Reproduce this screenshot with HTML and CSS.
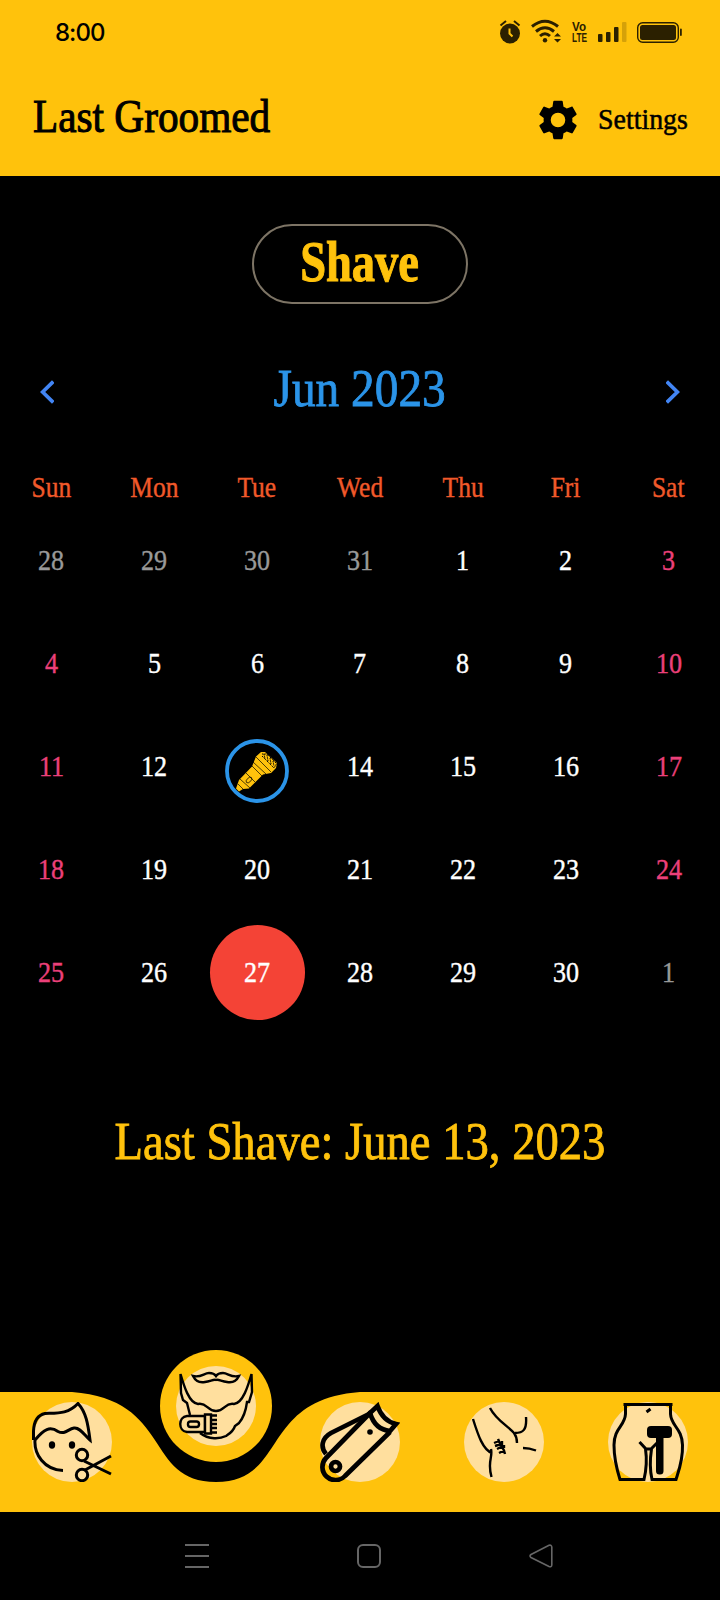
FILE: index.html
```html
<!DOCTYPE html>
<html lang="en">
<head>
<meta charset="utf-8">
<title>Last Groomed</title>
<link rel="stylesheet" href="styles.css">
</head>
<body>
<div class="app">
  <header class="header">
    <div class="status">
      <span class="clock">8:00</span>
      <svg class="status-icons" viewBox="0 0 190 28" width="190" height="28" fill="#2b2000">
        <circle cx="18" cy="15.500" r="10"/>
        <path d="M8.500 7.500L14 3M22 3L27.500 7.500" stroke="#2b2000" stroke-width="2"/>
        <path d="M17.500 10.500V15.500L20.500 18.500" stroke="#ffc20c" stroke-width="2" fill="none"/>
        <g fill="none" stroke="#2b2000" stroke-width="3">
          <path d="M40 8.500Q53 -2 66 8.500M44 13.500Q53 6 62 13.500M48 18Q53 13.500 58 18"/>
        </g>
        <circle cx="53" cy="22.300" r="2.200"/>
        <path d="M62 18.500L65.500 15L69 18.500ZM62 21L65.500 24.500L69 21Z"/>
        <text class="volte" x="80" y="13" textLength="14" lengthAdjust="spacingAndGlyphs">Vo</text>
        <text class="volte" x="80" y="24" textLength="15" lengthAdjust="spacingAndGlyphs">LTE</text>
        <rect x="106" y="16" width="4.500" height="8" rx="1"/>
        <rect x="114" y="14" width="4.500" height="10" rx="1"/>
        <rect x="122" y="9" width="4.500" height="15" rx="1"/>
        <rect x="130" y="4" width="4.500" height="20" rx="1" opacity=".2"/>
        <rect x="145.700" y="4.700" width="40.600" height="19.600" rx="5" fill="none" stroke="#2b2000" stroke-width="1.400"/>
        <rect x="148" y="7" width="36" height="15" rx="2.500"/>
        <rect x="188" y="10.500" width="1.800" height="7.500" rx=".9"/>
      </svg>
    </div>
    <div class="toolbar">
      <h1 class="title">Last Groomed</h1>
      <div class="settings">
        <svg class="gear" viewBox="0 0 24 24" width="46" height="46"><path d="M19.430 12.980c.04-.32.07-.64.07-.98s-.03-.66-.07-.98l2.110-1.650c.19-.15.24-.42.12-.64l-2-3.460c-.12-.22-.39-.3-.61-.22l-2.490 1c-.52-.4-1.080-.73-1.690-.98l-.38-2.650C14.460 2.180 14.250 2 14 2h-4c-.25 0-.46.18-.49.42l-.38 2.650c-.61.25-1.170.59-1.690.98l-2.490-1c-.23-.09-.49 0-.61.22l-2 3.460c-.13.22-.07.49.12.64l2.110 1.650c-.04.32-.07.65-.07.98s.03.66.07.98l-2.110 1.650c-.19.15-.24.42-.12.64l2 3.460c.12.22.39.3.61.22l2.490-1c.52.4 1.080.73 1.690.98l.38 2.650c.03.24.24.42.49.42h4c.25 0 .46-.18.49-.42l.38-2.650c.61-.25 1.170-.59 1.690-.98l2.490 1c.23.09.49 0 .61-.22l2-3.460c.12-.22.07-.49-.12-.64l-2.110-1.650zM12 15.800A3.800 3.800 0 1 1 12 8.200A3.800 3.800 0 1 1 12 15.800z"/></svg>
        <span class="settings-label">Settings</span>
      </div>
    </div>
  </header>

  <main class="content">
    <div class="pill"><span class="pill-label">Shave</span></div>
    <div class="month">
      <svg class="chevron" viewBox="0 0 14 24" width="14" height="24"><path d="M13.300 1.500L2.600 12L13.300 22.500"/></svg>
      <span class="month-label">Jun 2023</span>
      <svg class="chevron" viewBox="0 0 14 24" width="14" height="24"><path d="M.7 1.500L11.400 12L.7 22.500"/></svg>
    </div>
    <div class="weekdays">
      <span>Sun</span><span>Mon</span><span>Tue</span><span>Wed</span><span>Thu</span><span>Fri</span><span>Sat</span>
    </div>
    <div class="days">
      <span class="out">28</span><span class="out">29</span><span class="out">30</span><span class="out">31</span><span>1</span><span>2</span><span class="weekend">3</span>
      <span class="weekend">4</span><span>5</span><span>6</span><span>7</span><span>8</span><span>9</span><span class="weekend">10</span>
      <span class="weekend">11</span><span>12</span>
      <div class="marked">
        <svg viewBox="0 0 64 64" width="64" height="64">
          <circle cx="32" cy="32" r="30" fill="none" stroke="#2b94e8" stroke-width="3.800"/>
          <path fill="#ffc20c" d="M31 17.500L36 13L40 13L52 24L51 29L46 34L38 35.500L24 49.500L18 50L14 52.500L11 49.500L14 41L27 27.500Z"/>
          <g fill="none" stroke="#000" stroke-width=".7">
            <path d="M31 18L46 33M28 23L41 35M27 27L37 37M21 34L30 43M15 40L25 49M13 45L18 50"/>
            <path d="M37 17L49 29L52 24M39 15L40 20M42 16L43 22M45 19L46 25M48 22L49 27M37 15L42 15L51 24" stroke-width="1" stroke-dasharray="1.500 .8"/>
            <ellipse cx="24" cy="41" rx="2" ry="3.500" transform="rotate(45 24 41)"/>
          </g>
        </svg>
      </div>
      <span>14</span><span>15</span><span>16</span><span class="weekend">17</span>
      <span class="weekend">18</span><span>19</span><span>20</span><span>21</span><span>22</span><span>23</span><span class="weekend">24</span>
      <span class="weekend">25</span><span>26</span><div class="today"><span>27</span></div><span>28</span><span>29</span><span>30</span><span class="out">1</span>
    </div>
    <div class="summary"><span class="summary-label">Last Shave: June 13, 2023</span></div>
  </main>

  <nav class="tabs">
    <svg class="tabs-shape" viewBox="0 0 720 120" width="720" height="120"><path fill="#ffc20c" d="M0 0H72C172.800 7.500 144 90 216 90C288 90 259.200 7.500 360 0H720V120H0Z"/></svg>
    <div class="tab">
      <svg class="tab-icon" viewBox="0 0 80 80">
        <circle class="disc" cx="40" cy="40" r="40"/>
        <path d="M1.500 38V29C2 19 6 13 13 11.500C26 11 36 12 46 1.500C54 10 56 22 58 38C53 34 48 25 42 26C36 27 33 33 26 29.500C18 24 12 27 3 38C2 52 12 68 31 68.500"/>
        <g class="solid"><ellipse cx="20" cy="43" rx="3.200" ry="3.700"/><ellipse cx="40" cy="43" rx="3.200" ry="3.700"/></g>
        <circle cx="50" cy="53" r="5.700"/><circle cx="50" cy="73" r="5.700"/>
        <path d="M52 59L79 72M53 68L79 54"/>
      </svg>
    </div>
    <div class="tab tab-active">
      <div class="bubble">
        <svg class="tab-icon beard" viewBox="0 0 80 80">
          <circle class="disc" cx="40" cy="40" r="40"/>
          <path d="M17 10C25 12 28 7 33 7Q38 7 40 10Q42 7 47 7C52 7 55 12 63 10C60 16 56 17 51 16C45 15 42 13 40 14C38 13 35 15 29 16C24 17 20 16 17 10Z"/>
          <path d="M14 49L11 37L7 34L5 27L4.500 8C8 20 13 37 22 38C31 36 31 45 40 45C49 45 49 36 58 38C67 37 72 20 75.500 8L76 26L73 36L71 36C70 44 68 51 63 57L59 60C57 66 53 68 50 70C44 73 33 74 24 67"/>
          <path class="disc outlined" d="M11 50H29V66H11C2 65 2 51 11 50Z"/>
          <path class="disc outlined" d="M29 48.500H35V67.500H29Z"/>
          <rect x="12" y="55.500" width="11" height="5.500" rx="2.500"/>
          <path d="M35 49.500H41M35 54H41M35 58H41M35 62H41M35 66.500H41"/>
        </svg>
      </div>
    </div>
    <div class="tab">
      <svg class="tab-icon" viewBox="0 0 80 80">
        <circle class="disc" cx="40" cy="40" r="40"/>
        <g stroke-width="4.700">
          <path d="M51 10L6 56A13 13 0 0 0 25 74L70 30"/>
          <path d="M57.500 4C61 14 67 20 76 22L70 29C59 28 53 21 50 11Z"/>
          <path d="M49 12L11 31C2 36 0 45 6 52"/>
          <circle cx="15.500" cy="64.500" r="4.500"/>
        </g>
        <circle class="solid" cx="50" cy="30" r="2.800"/>
      </svg>
    </div>
    <div class="tab">
      <svg class="tab-icon thin" viewBox="0 0 80 80">
        <circle class="disc" cx="40" cy="40" r="40"/>
        <path d="M9 17C14 33 19 48 28 51M27 47C29 56 23 59 27.500 75M26 6C32 18 44 24 50 31C53 35 53 38 53 41M51 31C59 31 63 28 62 15M59 46C64 46 68 47 72 48.500"/>
        <path d="M34 37C36 43 40 46 41 52M30 41L35 39M31 44L37 42M33 47L39 44M35 51L41 48M38 43L38 39M40 46L40 43"/>
      </svg>
    </div>
    <div class="tab">
      <svg class="tab-icon" viewBox="0 0 80 80">
        <circle class="disc" cx="40" cy="40" r="40"/>
        <path d="M15.500 2.500H64.500M17.500 3V12C17 24 6 26 6 43C6 58 9 68 12 77.500H36C38 69 39 57 37.500 47M62.500 3V12C63 24 74 26 74.500 43C75 58 71 68 68 77.500H44C42 69 42 57 43.500 47"/>
        <path d="M31.500 40L38 47H43L49 41M38.500 10L42.500 7"/>
        <g class="solid"><rect x="39" y="24" width="25" height="12" rx="4"/><rect x="48" y="30" width="7.500" height="42.500" rx="3.500"/></g>
      </svg>
    </div>
  </nav>

  <div class="system">
    <svg viewBox="0 0 24 24" width="24" height="24"><path d="M0 1H24M0 12H24M0 23H24"/></svg>
    <svg viewBox="0 0 24 24" width="24" height="24"><rect x="1" y="1" width="22" height="22" rx="5"/></svg>
    <svg viewBox="0 0 24 24" width="24" height="24"><path d="M2 10.500L20 1.300Q22.500 .5 22.800 3V21Q22.500 23.500 20 22.500L2 13.500Q0 12 2 10.500Z" stroke-width="1.600"/></svg>
  </div>
</div>
</body>
</html>
```

FILE: styles.css
```css
* { box-sizing: border-box; }

body {
  margin: 0;
  background: #000;
  font-family: "Liberation Serif", serif;
}

svg { display: block; }

.app {
  display: flex;
  flex-direction: column;
  width: 720px;
  height: 1600px;
  overflow: hidden;
}

.header {
  height: 176px;
  background: #ffc20c;
  color: #000;
}

.status {
  display: flex;
  justify-content: space-between;
  height: 64px;
  padding: 18px 38px 0 55px;
}

.clock {
  font: 500 24px/29px Inter, sans-serif;
  letter-spacing: -1px;
}

.volte { font: 700 13.5px "Liberation Sans", sans-serif; }

.toolbar {
  display: flex;
  align-items: center;
  justify-content: space-between;
  height: 112px;
  padding: 0 32px 0 33px;
}

.title {
  margin: 0;
  font-size: 46px;
  font-weight: 400;
  line-height: 56px;
  -webkit-text-stroke: 1px;
  transform: translateY(-3px) scaleX(0.897);
  transform-origin: left;
}

.settings {
  display: flex;
  align-items: center;
  width: 153px;
  gap: 17px;
}

.gear { flex: none; }

.settings-label {
  font-size: 30px;
  line-height: 36px;
  -webkit-text-stroke: 0.5px;
  transform: translateY(-1px) scaleX(0.93);
  transform-origin: left;
}

.content {
  display: flex;
  flex-direction: column;
  align-items: center;
  height: 1216px;
  padding-top: 48px;
  white-space: nowrap;
}

.pill {
  display: flex;
  align-items: center;
  justify-content: center;
  width: 216px;
  height: 80px;
  border: 2px solid #7d7465;
  border-radius: 40px;
}

.pill-label {
  color: #ffc20c;
  font-size: 56px;
  font-weight: 700;
  line-height: 64px;
  -webkit-text-stroke: 1px;
  transform: translateY(-2px) scaleX(0.83);
}

.month {
  display: flex;
  align-items: center;
  justify-content: space-between;
  width: 100%;
  height: 80px;
  margin-top: 48px;
  padding: 0 40px;
}

.chevron {
  fill: none;
  stroke: #4285f4;
  stroke-width: 3.8;
}

.month-label {
  color: #2b94e8;
  font-size: 52px;
  -webkit-text-stroke: 0.8px;
  transform: translateY(-4px) scaleX(0.91);
}

.weekdays,
.days {
  display: grid;
  grid-template-columns: repeat(7, 1fr);
  width: 100%;
  justify-items: center;
  align-items: center;
  font-size: 30px;
  -webkit-text-stroke: 0.4px;
}

.weekdays {
  height: 44px;
  margin-top: 33px;
  color: #f1592a;
}

.weekdays span { transform: scaleX(0.85); }

.days {
  grid-auto-rows: 102.86px;
  color: #fff;
}

.days span { transform: scaleX(0.87); }
.days .out { color: #999; }
.days .weekend { color: #ec407a; }

.marked { padding-top: 9px; }

.today {
  display: flex;
  align-items: center;
  justify-content: center;
  width: 95px;
  height: 95px;
  margin-top: 2px;
  padding-bottom: 2px;
  border-radius: 50%;
  background: #f44336;
}

.summary {
  display: flex;
  align-items: center;
  justify-content: center;
  height: 80px;
  margin-top: 78px;
}

.summary-label {
  color: #ffc20c;
  font-size: 53px;
  -webkit-text-stroke: 0.8px;
  transform: scaleX(0.88);
}

.tabs {
  position: relative;
  display: grid;
  grid-template-columns: repeat(5, 144px);
  height: 120px;
}

.tabs-shape {
  position: absolute;
  inset: 0;
}

.tab {
  position: relative;
  display: flex;
  justify-content: center;
  padding-top: 10px;
}

.tab-active {
  padding-top: 0;
  margin-top: -42px;
}

.bubble {
  display: flex;
  align-items: center;
  justify-content: center;
  width: 112px;
  height: 112px;
  border-radius: 50%;
  background: #ffc20c;
}

.tab-icon {
  width: 80px;
  height: 80px;
  fill: none;
  stroke: #000;
  stroke-width: 3;
}

.thin { stroke-width: 2.4; }
.beard { stroke-width: 2.4; }

.disc {
  fill: #ffdf9e;
  stroke: none;
}

.outlined { stroke: #000; }

.solid { fill: #000; stroke: none; }

.system {
  display: flex;
  align-items: center;
  justify-content: space-between;
  height: 88px;
  padding: 0 167px 0 185px;
}

.system svg {
  fill: none;
  stroke: #666;
  stroke-width: 2;
}
```
